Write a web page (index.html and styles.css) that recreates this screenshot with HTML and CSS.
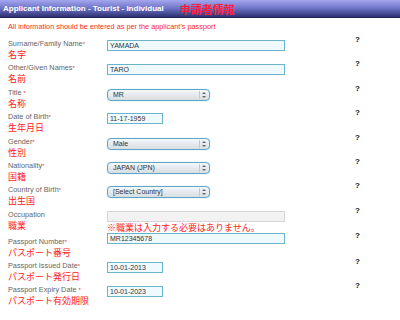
FILE: index.html
```html
<!DOCTYPE html>
<html lang="ja">
<head>
    <meta charset="UTF-8">
    <meta name="viewport" content="width=device-width, initial-scale=1.0">
    <title>Applicant Information</title>
    <link rel="stylesheet" href="styles.css">
</head>
<body>

<div class="header">
    <span class="header-title">Applicant Information - Tourist - Individual</span>
    <span class="header-jp">申請者情報</span>
</div>
<p class="notice">All information should be entered as per the applicant's passport</p>

<div class="form">
    <div class="row">
        <div class="label">Surname/Family Name<span class="req">*</span><span class="jp">名字</span></div>
        <div class="field"><input type="text" class="text long" value="YAMADA"></div>
        <div class="help">?</div>
    </div>
    <div class="row">
        <div class="label">Other/Given Names<span class="req">*</span><span class="jp">名前</span></div>
        <div class="field"><input type="text" class="text long" value="TARO"></div>
        <div class="help">?</div>
    </div>
    <div class="row">
        <div class="label">Title <span class="req">*</span><span class="jp">名称</span></div>
        <div class="field">
            <div class="select"><select><option>MR</option></select><span class="arrows"></span></div>
        </div>
        <div class="help">?</div>
    </div>
    <div class="row">
        <div class="label">Date of Birth<span class="req">*</span><span class="jp">生年月日</span></div>
        <div class="field"><input type="text" class="text short" value="11-17-1959"></div>
        <div class="help">?</div>
    </div>
    <div class="row">
        <div class="label">Gender<span class="req">*</span><span class="jp">性別</span></div>
        <div class="field">
            <div class="select"><select><option>Male</option></select><span class="arrows"></span></div>
        </div>
        <div class="help">?</div>
    </div>
    <div class="row">
        <div class="label">Nationality<span class="req">*</span><span class="jp">国籍</span></div>
        <div class="field">
            <div class="select"><select><option>JAPAN (JPN)</option></select><span class="arrows"></span></div>
        </div>
        <div class="help">?</div>
    </div>
    <div class="row">
        <div class="label">Country of Birth<span class="req">*</span><span class="jp">出生国</span></div>
        <div class="field">
            <div class="select"><select><option>[Select Country]</option></select><span class="arrows"></span></div>
        </div>
        <div class="help">?</div>
    </div>
    <div class="row row-occupation">
        <div class="label">Occupation<span class="jp">職業</span></div>
        <div class="field">
            <input type="text" class="text long" disabled>
            <span class="field-note">※職業は入力する必要はありません。</span>
        </div>
        <div class="help">?</div>
    </div>
    <div class="row row-passport">
        <div class="label">Passport Number<span class="req">*</span><span class="jp">パスポート番号</span></div>
        <div class="field"><input type="text" class="text long" value="MR12345678"></div>
        <div class="help">?</div>
    </div>
    <div class="row">
        <div class="label">Passport Issued Date<span class="req">*</span><span class="jp">パスポート発行日</span></div>
        <div class="field"><input type="text" class="text short" value="10-01-2013"></div>
        <div class="help">?</div>
    </div>
    <div class="row">
        <div class="label">Passport Expiry Date <span class="req">*</span><span class="jp">パスポート有効期限</span></div>
        <div class="field"><input type="text" class="text short" value="10-01-2023"></div>
        <div class="help">?</div>
    </div>
</div>

</body>
</html>
```

FILE: styles.css
```css
body {
    margin: 0;
    font-family: "Liberation Sans", Arial, sans-serif;
    background-color: #ffffff;
    color: #666;
}
.header {
    display: flex;
    align-items: center;
    height: 17px;
    padding-left: 3px;
    white-space: nowrap;
    background: linear-gradient(#a4a7ef, #6d72c4 50%, #2c3171);
    border-bottom: 1px solid #1f2458;
}
.header-title {
    color: #ffffff;
    font-size: 8px;
    font-weight: bold;
}
.header-jp {
    margin-left: 16px;
    color: #ff1e3c;
    font-size: 11px;
    line-height: 12px;
    font-weight: bold;
    font-family: "Noto Sans CJK JP", sans-serif;
}
.notice {
    margin: 4px 0 0 8px;
    font-size: 7.3px;
    line-height: 10px;
    color: #ff2a2a;
}
.form {
    padding: 4px 0 0 8px;
}
.row {
    display: grid;
    grid-template-columns: 99px 248px auto;
    height: 24.4px;
}
.row-occupation {
    height: 22px;
}
.row-passport {
    height: 29px;
}
.label {
    padding-top: 3px;
    font-size: 7.3px;
    line-height: 10px;
    white-space: nowrap;
}
.row-passport .label {
    padding-top: 8px;
}
.req {
    color: #ff2a2a;
    font-size: 6px;
    vertical-align: top;
}
.jp {
    display: block;
    color: #ff1a1a;
    font-size: 9px;
    line-height: 12px;
    font-family: "Noto Sans CJK JP", sans-serif;
}
.field {
    padding-top: 4px;
}
.help {
    font-size: 8px;
    font-weight: bold;
    line-height: 8px;
    color: #111;
}
.row-passport .help {
    padding-top: 3px;
}
input.text {
    display: block;
    box-sizing: border-box;
    height: 11px;
    margin: 0;
    padding: 0 2px;
    border: 1px solid #6cb4cc;
    background-color: #effaff;
    font-family: "Liberation Sans", Arial, sans-serif;
    font-size: 7px;
    color: #333;
}
input.long {
    width: 178px;
}
input.short {
    width: 56px;
}
input.text:disabled {
    background-color: #f2f2f2;
    border-color: #d6d6d6;
}
.field-note {
    display: block;
    color: #ff1a1a;
    font-size: 9px;
    line-height: 11px;
    font-family: "Noto Sans CJK JP", sans-serif;
    white-space: nowrap;
}
.select {
    position: relative;
    width: 103px;
    height: 12px;
}
.select select {
    display: block;
    appearance: none;
    box-sizing: border-box;
    width: 103px;
    height: 12px;
    margin: 0;
    padding: 0 0 0 5px;
    border: 1px solid #5aa8c4;
    border-radius: 4px;
    background: linear-gradient(#f5f7f9, #d8dde2);
    box-shadow: 0 0 1px #7fc2dc;
    font-family: "Liberation Sans", Arial, sans-serif;
    font-size: 7px;
    line-height: 10px;
    color: #333;
}
.arrows {
    position: absolute;
    top: 2px;
    right: 1px;
    width: 9px;
    height: 8px;
    border-left: 1px solid #c4c9ce;
}
.arrows::before,
.arrows::after {
    content: "";
    position: absolute;
    left: 2px;
    border-left: 2px solid transparent;
    border-right: 2px solid transparent;
}
.arrows::before {
    top: 1px;
    border-bottom: 2px solid #666;
}
.arrows::after {
    bottom: 1px;
    border-top: 2px solid #666;
}
```
